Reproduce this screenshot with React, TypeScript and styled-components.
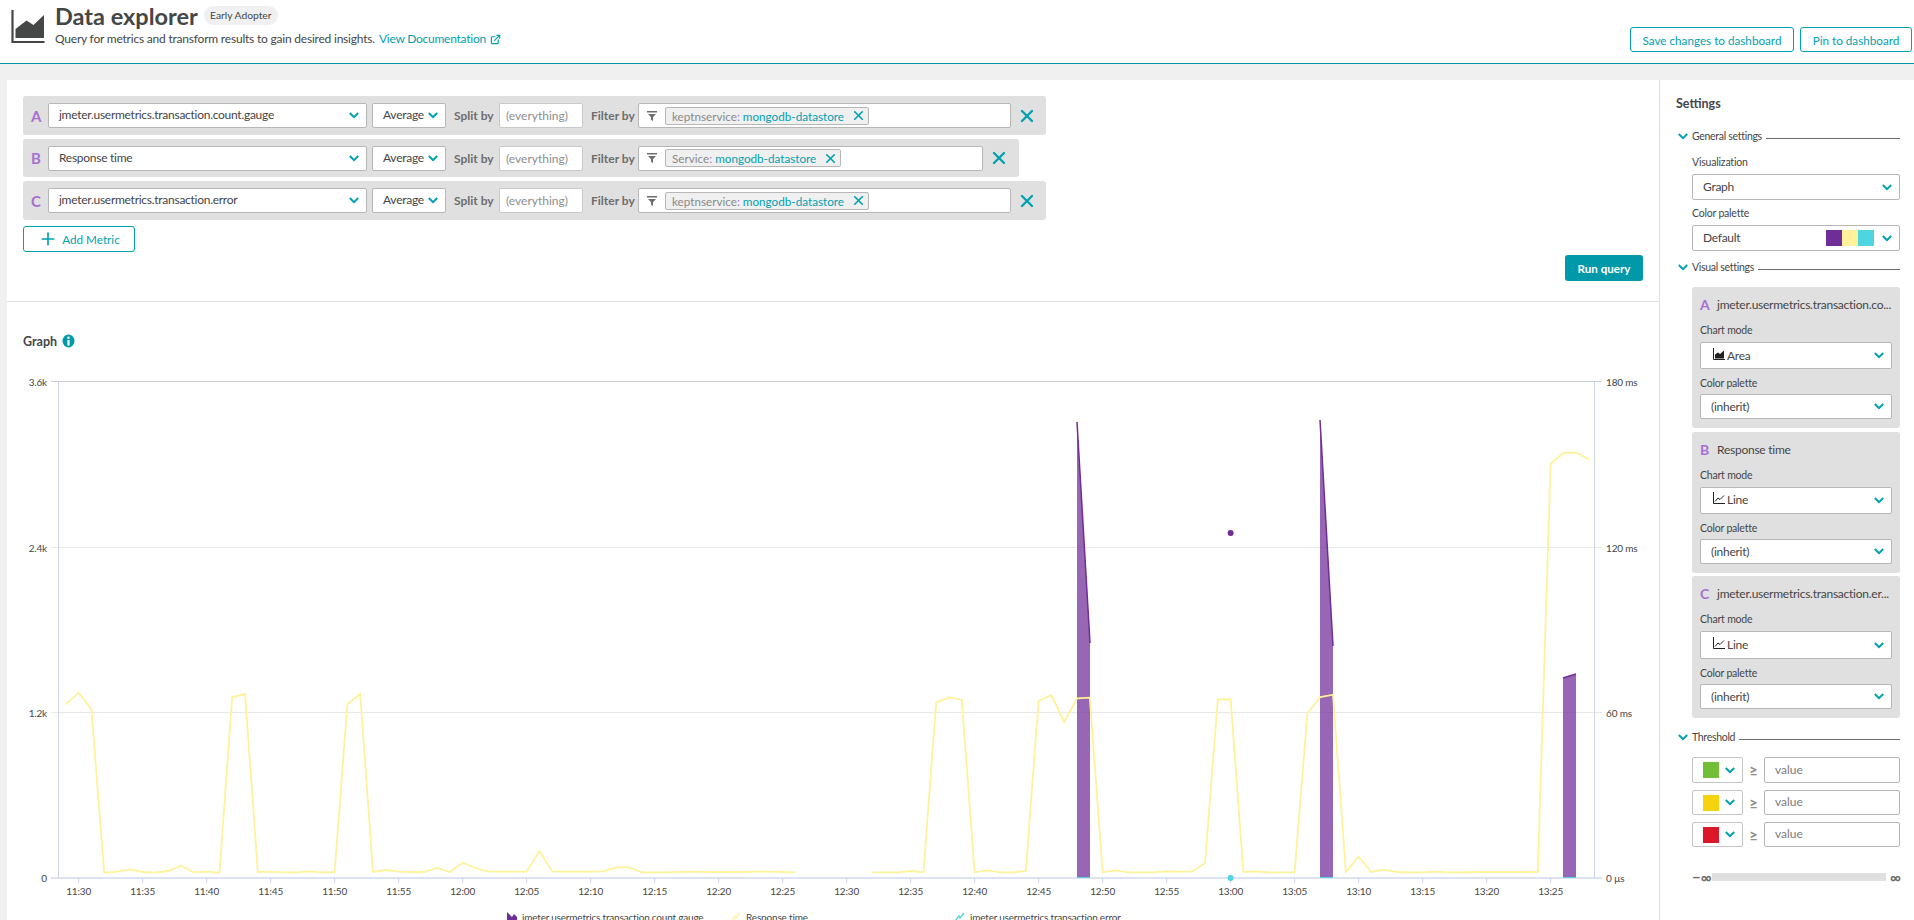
import React from "react";
import styled, { createGlobalStyle } from "styled-components";
import { Plus, X, ExternalLink } from "lucide-react";

const TEAL = "#00a1b2";
const TEXT = "#454646";
const FONT = `"Lato", "Open Sans", sans-serif`;
const PURPLE = "#6f2d98";
const YELLOW = "#fff29a";
const CYAN = "#4fd5e0";

const Global = createGlobalStyle`
  html, body { margin: 0; padding: 0; height: 920px; overflow: hidden; background: #f0f0f0; }
  body, input, button { font-family: ${FONT}; color: ${TEXT}; }
  #root { height: 920px; }
`;

const Page = styled.div`
  display: flex;
  flex-direction: column;
  width: 1914px;
  height: 920px;
  overflow: hidden;
`;
const Header = styled.header`
  display: flex;
  justify-content: space-between;
  height: 63px;
  background: #fff;
  border-bottom: 1px solid #00929f;
  flex: none;
`;
const HeaderLeft = styled.div`
  display: flex;
  padding-left: 11px;
`;
const AppIcon = styled.svg`
  width: 34px;
  height: 34px;
  margin-top: 10px;
  flex: none;
`;
const TitleBlock = styled.div`
  margin-left: 10px;
`;
const TitleRow = styled.div`
  display: flex;
  align-items: center;
  height: 31px;
`;
const Title = styled.h1`
  margin: 0;
  font-size: 23.5px;
  font-weight: 700;
  line-height: 30px;
  color: ${TEXT};
`;
const Badge = styled.span`
  margin-left: 6px;
  margin-top: -1px;
  width: 74px;
  height: 19px;
  line-height: 19px;
  border-radius: 10px;
  background: #f0f0f0;
  font-size: 10.3px;
  text-align: center;
`;
const Subtitle = styled.p`
  margin: 0;
  font-size: 12px;
  letter-spacing: -0.21px;
  line-height: 16px;
  display: flex;
  align-items: center;
`;
const DocLink = styled.a`
  color: ${TEAL};
  margin-left: 4px;
  display: inline-flex;
  align-items: center;
  gap: 4px;
  letter-spacing: -0.25px;
`;
const HeaderActions = styled.div`
  display: flex;
  gap: 6px;
  padding: 27px 2px 0 0;
`;
const OutlineButton = styled.button<{ $w: number; $h?: number }>`
  width: ${(p) => p.$w}px;
  height: ${(p) => p.$h ?? 25}px;
  background: #fff;
  border: 1px solid ${TEAL};
  border-radius: 3px;
  color: ${TEAL};
  font-size: 11.7px;
  padding: 0;
  display: flex;
  align-items: center;
  justify-content: center;
  gap: 4px;
`;
const Main = styled.main`
  display: grid;
  grid-template-columns: 1653px 1fr;
  margin: 16px 0 0 7px;
  height: 840px;
  background: #fff;
`;
const LeftColumn = styled.div`
  border-right: 1px solid #e0e0e0;
  display: flex;
  flex-direction: column;
  min-width: 0;
`;
const QuerySection = styled.section`
  height: 222px;
  box-sizing: border-box;
  padding: 16px 16px 0;
  border-bottom: 1px solid #e0e0e0;
  flex: none;
`;
const Rows = styled.div`
  display: flex;
  flex-direction: column;
  gap: 4px;
  align-items: flex-start;
`;
const Row = styled.div<{ $w: number; $h: number }>`
  width: ${(p) => p.$w}px;
  height: ${(p) => p.$h}px;
  box-sizing: border-box;
  background: #e0e0e0;
  border-radius: 3px;
  padding-left: 8px;
  display: flex;
  align-items: center;
`;
const Letter = styled.span`
  width: 17px;
  flex: none;
  font-size: 15px;
  font-weight: 700;
  color: #a66fd1;
`;
const Chevron = styled.svg`
  width: 10px;
  height: 7px;
  flex: none;
`;
const Down = () => (
  <Chevron viewBox="0 0 10 7">
    <polyline points="0.8,1 5,5.2 9.2,1" fill="none" stroke={TEAL} strokeWidth="2" />
  </Chevron>
);
const SelectBox = styled.div<{ $w?: number; $h?: number; $pl?: number; $ml?: number; $pb?: number }>`
  ${(p) => (p.$w ? `width: ${p.$w}px; flex: none;` : "")}
  margin-left: ${(p) => p.$ml ?? 0}px;
  height: ${(p) => p.$h ?? 25}px;
  box-sizing: border-box;
  background: #fff;
  border: 1px solid #b7b7b7;
  border-radius: 2px;
  padding: 0 7px ${(p) => p.$pb ?? 2}px ${(p) => p.$pl ?? 10}px;
  display: flex;
  align-items: center;
  font-size: 12px;
  letter-spacing: -0.27px;
  color: ${TEXT};
  ${Chevron} {
    margin-top: ${(p) => p.$pb ?? 2}px;
  }
`;
const SelectText = styled.span`
  flex: 1;
  white-space: nowrap;
  display: flex;
  align-items: center;
`;
const RowLabel = styled.span<{ $ml: number; $w: number }>`
  margin-left: ${(p) => p.$ml}px;
  width: ${(p) => p.$w}px;
  flex: none;
  font-size: 12px;
  font-weight: 700;
  color: #6d6d6d;
  white-space: nowrap;
`;
const SplitInput = styled.div`
  width: 84px;
  height: 25px;
  margin-left: 5px;
  flex: none;
  box-sizing: border-box;
  background: #fff;
  border: 1px solid #c9c9c9;
  border-radius: 2px;
  padding-left: 6px;
  display: flex;
  align-items: center;
  font-size: 12px;
  color: #8e8e8e;
`;
const FilterBox = styled.div<{ $w: number }>`
  width: ${(p) => p.$w}px;
  height: 25px;
  margin-left: 4px;
  flex: none;
  box-sizing: border-box;
  background: #fff;
  border: 1px solid #b7b7b7;
  border-radius: 2px;
  padding-left: 8px;
  display: flex;
  align-items: center;
`;
const FunnelIcon = styled.svg`
  width: 10px;
  height: 10px;
  flex: none;
  margin-right: 8px;
`;
const Tag = styled.span`
  height: 18px;
  box-sizing: border-box;
  background: #f0f0f0;
  border: 1px solid #b7b7b7;
  border-radius: 2px;
  padding: 0 2px 0 6px;
  display: flex;
  align-items: center;
  font-size: 11.7px;
  color: #8a8a8a;
  white-space: nowrap;
`;
const TagValue = styled.span`
  color: ${TEAL};
  margin-left: 3px;
`;
const TagColon = styled.span`
  color: #a66fd1;
`;
const TagClose = styled(X)`
  margin-left: 7px;
  color: ${TEAL};
`;
const RowClose = styled(X)`
  margin-left: 6px;
  color: ${TEAL};
  flex: none;
`;
const AddRow = styled.div`
  margin-top: 6px;
`;
const PlusIcon = styled(Plus)`
  color: ${TEAL};
  flex: none;
`;
const RunRow = styled.div`
  display: flex;
  justify-content: flex-end;
  margin-top: 3px;
`;
const RunButton = styled.button`
  width: 78px;
  height: 26px;
  border: 0;
  border-radius: 3px;
  background: #0099aa;
  color: #fff;
  font-size: 11.6px;
  font-weight: 700;
  padding: 0;
`;
const GraphSection = styled.section`
  flex: 1;
  min-height: 0;
  overflow: hidden;
  padding-top: 30px;
`;
const GraphTitle = styled.div`
  display: flex;
  align-items: center;
  gap: 5px;
  height: 18px;
  padding-left: 16px;
  font-size: 12.5px;
  font-weight: 700;
`;
const InfoIcon = styled.svg`
  width: 13px;
  height: 14px;
`;
const ChartSvg = styled.svg`
  display: block;
  margin-top: 20px;
  width: 1650px;
  height: 550px;
`;
const Settings = styled.aside`
  padding: 16px 14px 0 16px;
  min-width: 0;
`;
const SettingsTitle = styled.h2`
  margin: 0 0 16px;
  font-size: 12.5px;
  font-weight: 700;
  line-height: 16px;
`;
const SectionHead = styled.div<{ $mt?: number }>`
  display: flex;
  align-items: center;
  height: 16px;
  margin-top: ${(p) => p.$mt ?? 0}px;
  padding-left: 2px;
  font-size: 10.5px;
  letter-spacing: -0.3px;
  white-space: nowrap;
`;
const SectionName = styled.span`
  margin-left: 4px;
`;
const SectionRule = styled.span`
  flex: 1;
  height: 1px;
  background: #6d6d6d;
  margin: 5px 0 0 4px;
`;
const SectionBody = styled.div<{ $mt: number }>`
  margin: ${(p) => p.$mt}px 0 0 16px;
`;
const FieldLabel = styled.div<{ $mt?: number; $mb?: number }>`
  height: 14px;
  line-height: 14px;
  font-size: 10.5px;
  letter-spacing: -0.2px;
  margin-top: ${(p) => p.$mt ?? 0}px;
  margin-bottom: ${(p) => p.$mb ?? 5}px;
`;
const Swatches = styled.div`
  display: flex;
  margin: 2px 8px 0 0;
`;
const Swatch = styled.span<{ $c: string }>`
  width: 16px;
  height: 16px;
  background: ${(p) => p.$c};
  flex: none;
`;
const Card = styled.div<{ $mt?: number; $pb?: number }>`
  background: #e0e0e0;
  border-radius: 3px;
  padding: 8px 8px ${(p) => p.$pb ?? 9}px;
  margin-top: ${(p) => p.$mt ?? 0}px;
`;
const CardTitle = styled.div`
  display: flex;
  align-items: center;
  height: 18px;
  margin-bottom: 10px;
  font-size: 12px;
  letter-spacing: -0.25px;
  white-space: nowrap;
`;
const CardLetter = styled.span`
  width: 17px;
  flex: none;
  font-size: 14px;
  font-weight: 700;
  color: #a66fd1;
`;
const ModeIcon = styled.svg`
  width: 12px;
  height: 12px;
  margin: -3px 2px 0 0;
`;
const ThresholdRow = styled.div<{ $mt: number; $h: number }>`
  display: flex;
  align-items: stretch;
  height: ${(p) => p.$h}px;
  margin-top: ${(p) => p.$mt}px;
`;
const ColorBox = styled.div`
  width: 51px;
  box-sizing: border-box;
  border: 1px solid #c4c4c4;
  border-radius: 2px;
  display: flex;
  align-items: center;
  padding-left: 10px;
  gap: 6px;
`;
const Gte = styled.span`
  width: 21px;
  display: flex;
  align-items: center;
  justify-content: center;
  font-size: 15px;
  font-weight: 700;
  color: #8a8a8a;
`;
const ValueBox = styled.div`
  flex: 1;
  box-sizing: border-box;
  border: 1px solid #b7b7b7;
  border-radius: 2px;
  padding: 0 0 2px 10px;
  display: flex;
  align-items: center;
  font-size: 12px;
  color: #7c7c7c;
`;
const SliderRow = styled.div`
  display: flex;
  align-items: center;
  margin-top: 26px;
  font-size: 15px;
  font-weight: 700;
  color: #6d6d6d;
  line-height: 8px;
`;
const InfinitySign = styled.span<{ $w: number }>`
  width: ${(p) => p.$w}px;
  flex: none;
  white-space: nowrap;
`;
const SliderTrack = styled.span`
  flex: 1;
  height: 8px;
  background: #e0e0e0;
  margin: 0 4px;
`;

const yTicks = [
  { y: 381.5, l: "3.6k", r: "180 ms", c: "#c9cbd6" },
  { y: 547.5, l: "2.4k", r: "120 ms", c: "#e8e8e8" },
  { y: 712.5, l: "1.2k", r: "60 ms", c: "#e8e8e8" },
  { y: 878, l: "0", r: "0 µs", c: "#dde3f1" },
];
const xOf = (min: number) => 78.6 + min * 12.8;
const labels: string[] = [];
for (let m = 0; m <= 115; m += 5) {
  const t = 11 * 60 + 30 + m;
  labels.push(`${Math.floor(t / 60)}:${String(t % 60).padStart(2, "0")}`);
}
// samples per minute, from 11:29 (zoom y -> page y = 660 + v/3)
const seg1 = [133,98,148,638,635,628,636,638,633,617,637,635,638,112,102,636,635,637,637,634,637,636,132,102,636,630,635,636,636,623,637,608,624,635,635,635,635,573,635,635,635,635,634,622,622,637,637,637,636,635,636,636,636,636,635,635,636,637];
const seg2 = [637,637,637,633,637,128,112,119,637,631,637,637,633,123,106,186,115,113,637,631,637,637,637,634,635,635,610,119,118,636,634,637,637,637,160,111,104,636,590,636,629,636,637,637,635,637,637,636,636,636,636,636,636];
const pts1 = seg1.map((v, i) => `${xOf(i - 1).toFixed(1)},${(660 + v / 3).toFixed(1)}`).join(" ");
const pts2 = seg2.map((v, i) => `${xOf(i + 62).toFixed(1)},${(660 + v / 3).toFixed(1)}`).join(" ")
  + " 1550.6,464 1563.4,453 1576.2,452.7 1589,459.3";

const bars = [
  { x1: 1077, x2: 1090, y1: 422, y2: 643 },
  { x1: 1320, x2: 1333, y1: 420, y2: 646 },
  { x1: 1563, x2: 1576, y1: 678, y2: 674 },
];

const ChartText = styled.text`
  font-family: ${FONT};
  font-size: 10px;
  letter-spacing: -0.17px;
  fill: ${TEXT};
`;

const Chart = () => (
  <ChartSvg viewBox="7 370 1650 550">
    {yTicks.map((t) => (
      <g key={t.l}>
        <line x1="51" x2="1602" y1={t.y} y2={t.y} stroke={t.c} strokeWidth={t.l === "0" ? 2 : 1.2} />
        <ChartText x="47" y={t.y + 4} textAnchor="end">{t.l}</ChartText>
        <ChartText x="1606" y={t.y + 4}>{t.r}</ChartText>
      </g>
    ))}
    <line x1="58.5" x2="58.5" y1="381" y2="878" stroke="#ccd6eb" />
    <line x1="1594.5" x2="1594.5" y1="381" y2="878" stroke="#ccd6eb" />
    {labels.map((l, i) => (
      <g key={l}>
        <line x1={xOf(i * 5)} x2={xOf(i * 5)} y1="878" y2="883" stroke="#ccd6eb" />
        <ChartText x={xOf(i * 5)} y="895" textAnchor="middle">{l}</ChartText>
      </g>
    ))}
    {bars.map((b) => (
      <g key={b.x1}>
        <polygon points={`${b.x1},${b.y1} ${b.x2},${b.y2} ${b.x2},878 ${b.x1},878`} fill={PURPLE} fillOpacity="0.72" />
        <line x1={b.x1} y1={b.y1} x2={b.x2} y2={b.y2} stroke={PURPLE} strokeWidth="1.5" />
        <line x1={b.x1} y1="877.5" x2={b.x2} y2="877.5" stroke={CYAN} strokeWidth="1" />
      </g>
    ))}
    <polyline points={pts1} fill="none" stroke={YELLOW} strokeWidth="1.8" />
    <polyline points={pts2} fill="none" stroke={YELLOW} strokeWidth="1.8" />
    <circle cx="1230.6" cy="533" r="3" fill={PURPLE} />
    <circle cx="1230.6" cy="878" r="3" fill={CYAN} />
    <path d="M507 912 L507 922 L517 922 L517 917 L514 914 L512 917 L509 914 Z" fill={PURPLE} />
    <ChartText x="522" y="921">jmeter.usermetrics.transaction.count.gauge</ChartText>
    <polyline points="731,921 735,916 736,918 740,913" fill="none" stroke={YELLOW} strokeWidth="1.3" />
    <ChartText x="746" y="921">Response time</ChartText>
    <polyline points="955,921 959,916 960,918 964,913" fill="none" stroke={CYAN} strokeWidth="1.3" />
    <ChartText x="970" y="921">jmeter.usermetrics.transaction.error</ChartText>
  </ChartSvg>
);

const Funnel = () => (
  <FunnelIcon viewBox="0 0 10 10">
    <path d="M0 0h10v1.6H0z M1 3h8L6 6.2V10L4 8.8V6.2z" fill="#6d6d6d" />
  </FunnelIcon>
);

const AreaIcon = () => (
  <ModeIcon viewBox="0 0 12 12">
    <path d="M0.5 0v11.5H12" fill="none" stroke="#222" strokeWidth="1" />
    <path d="M2 10.5V6.5L5 4.5 7 6l4-3.5v8z" fill="#222" />
  </ModeIcon>
);
const LineIcon = () => (
  <ModeIcon viewBox="0 0 12 12">
    <path d="M0.5 0v11.5H12" fill="none" stroke="#222" strokeWidth="1" />
    <path d="M2 9.5L5 6l2 1.5 4-4" fill="none" stroke="#222" strokeWidth="1" />
  </ModeIcon>
);

const metrics = [
  { l: "A", name: "jmeter.usermetrics.transaction.count.gauge", k: "keptnservice", w: 1023, f: 373, h: 39 },
  { l: "B", name: "Response time", k: "Service", w: 996, f: 345, h: 38 },
  { l: "C", name: "jmeter.usermetrics.transaction.error", k: "keptnservice", w: 1023, f: 373, h: 39 },
];

const cards = [
  { l: "A", t: "jmeter.usermetrics.transaction.co...", mode: "Area", icon: <AreaIcon />, mt: 0, h: 27, pb: 1 },
  { l: "B", t: "Response time", mode: "Line", icon: <LineIcon />, mt: 4, h: 27, pb: 2 },
  { l: "C", t: "jmeter.usermetrics.transaction.er...", mode: "Line", icon: <LineIcon />, mt: 3, h: 28, pb: 2 },
];

const thresholds = [
  { c: "#73be37", mt: 0, h: 26 },
  { c: "#f5d30f", mt: 7, h: 25 },
  { c: "#dc172a", mt: 7, h: 25 },
];

export default function App() {
  return (
    <Page>
      <Global />
      <Header>
        <HeaderLeft>
          <AppIcon viewBox="0 0 34 34">
            <path d="M1.5 0v32h32" fill="none" stroke="#454646" strokeWidth="2.2" />
            <path d="M4.5 28V19L15.5 10.5 22.5 15 33 5v23z" fill="#454646" />
          </AppIcon>
          <TitleBlock>
            <TitleRow>
              <Title>Data explorer</Title>
              <Badge>Early Adopter</Badge>
            </TitleRow>
            <Subtitle>
              Query for metrics and transform results to gain desired insights.
              <DocLink>
                View Documentation
                <ExternalLink size={11} strokeWidth={2.6} />
              </DocLink>
            </Subtitle>
          </TitleBlock>
        </HeaderLeft>
        <HeaderActions>
          <OutlineButton $w={164}>Save changes to dashboard</OutlineButton>
          <OutlineButton $w={112}>Pin to dashboard</OutlineButton>
        </HeaderActions>
      </Header>
      <Main>
        <LeftColumn>
          <QuerySection>
            <Rows>
              {metrics.map((m) => (
                <Row key={m.l} $w={m.w} $h={m.h}>
                  <Letter>{m.l}</Letter>
                  <SelectBox $w={319}>
                    <SelectText>{m.name}</SelectText>
                    <Down />
                  </SelectBox>
                  <SelectBox $w={74} $ml={5}>
                    <SelectText>Average</SelectText>
                    <Down />
                  </SelectBox>
                  <RowLabel $ml={8} $w={40}>Split by</RowLabel>
                  <SplitInput>(everything)</SplitInput>
                  <RowLabel $ml={8} $w={43}>Filter by</RowLabel>
                  <FilterBox $w={m.f}>
                    <Funnel />
                    <Tag>
                      {m.k}
                      <TagColon>:</TagColon>
                      <TagValue>mongodb-datastore</TagValue>
                      <TagClose size={15} strokeWidth={2.6} />
                    </Tag>
                  </FilterBox>
                  <RowClose size={20} strokeWidth={2.8} />
                </Row>
              ))}
            </Rows>
            <AddRow>
              <OutlineButton $w={112} $h={26}>
                <PlusIcon size={20} strokeWidth={2} />
                Add Metric
              </OutlineButton>
            </AddRow>
            <RunRow>
              <RunButton>Run query</RunButton>
            </RunRow>
          </QuerySection>
          <GraphSection>
            <GraphTitle>
              Graph
              <InfoIcon viewBox="0 0 13 14">
                <ellipse cx="6.5" cy="7" rx="6" ry="6.5" fill="#0099aa" />
                <circle cx="6.5" cy="3.8" r="1.2" fill="#fff" />
                <rect x="5.4" y="6" width="2.2" height="5.6" fill="#fff" />
              </InfoIcon>
            </GraphTitle>
            <Chart />
          </GraphSection>
        </LeftColumn>
        <Settings>
          <SettingsTitle>Settings</SettingsTitle>
          <SectionHead>
            <Down />
            <SectionName>General settings</SectionName>
            <SectionRule />
          </SectionHead>
          <SectionBody $mt={11}>
            <FieldLabel>Visualization</FieldLabel>
            <SelectBox $h={26}>
              <SelectText>Graph</SelectText>
              <Down />
            </SelectBox>
            <FieldLabel $mt={6}>Color palette</FieldLabel>
            <SelectBox $h={26}>
              <SelectText>Default</SelectText>
              <Swatches>
                <Swatch $c={PURPLE} />
                <Swatch $c={YELLOW} />
                <Swatch $c={CYAN} />
              </Swatches>
              <Down />
            </SelectBox>
          </SectionBody>
          <SectionHead $mt={8}>
            <Down />
            <SectionName>Visual settings</SectionName>
            <SectionRule />
          </SectionHead>
          <SectionBody $mt={12}>
            {cards.map((c) => (
              <Card key={c.l} $mt={c.mt}>
                <CardTitle>
                  <CardLetter>{c.l}</CardLetter>
                  {c.t}
                </CardTitle>
                <FieldLabel>Chart mode</FieldLabel>
                <SelectBox $h={c.h} $pl={12} $pb={c.pb}>
                  <SelectText>
                    {c.icon}
                    {c.mode}
                  </SelectText>
                  <Down />
                </SelectBox>
                <FieldLabel $mt={7} $mb={4}>Color palette</FieldLabel>
                <SelectBox $pb={0}>
                  <SelectText>(inherit)</SelectText>
                  <Down />
                </SelectBox>
              </Card>
            ))}
          </SectionBody>
          <SectionHead $mt={11}>
            <Down />
            <SectionName>Threshold</SectionName>
            <SectionRule />
          </SectionHead>
          <SectionBody $mt={12}>
            {thresholds.map((t) => (
              <ThresholdRow key={t.c} $mt={t.mt} $h={t.h}>
                <ColorBox>
                  <Swatch $c={t.c} />
                  <Down />
                </ColorBox>
                <Gte>≥</Gte>
                <ValueBox>value</ValueBox>
              </ThresholdRow>
            ))}
            <SliderRow>
              <InfinitySign $w={16}>−∞</InfinitySign>
              <SliderTrack />
              <InfinitySign $w={10}>∞</InfinitySign>
            </SliderRow>
          </SectionBody>
        </Settings>
      </Main>
    </Page>
  );
}
